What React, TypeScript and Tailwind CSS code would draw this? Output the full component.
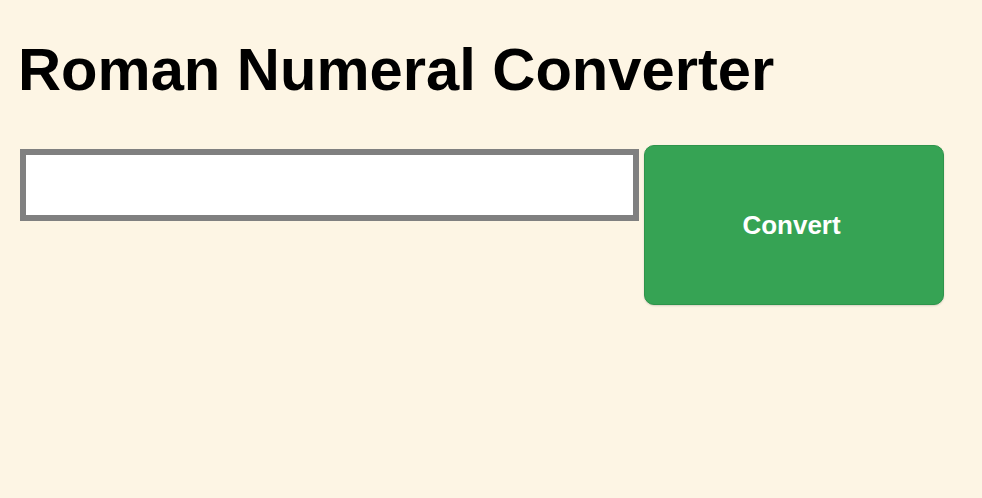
import React from "react";

export default function App() {
  return (
    <div className="min-h-[498px] w-full bg-[#fdf5e4] px-[20px] pt-[40px]" style={{ fontFamily: '"Liberation Sans", Arial, sans-serif' }}>
      <h1 className="-ml-[2px] m-0 text-[59.7px] font-bold leading-[60px] text-black" style={{ fontFamily: '"Liberation Sans", Arial, sans-serif' }}>
        Roman Numeral Converter
      </h1>
      <div className="mt-[45px] flex items-start gap-[5px]">
        <input
          type="text"
          className="mt-[4px] box-border h-[72px] w-[619px] border-[6px] border-solid border-[#808080] bg-white px-2 text-[24px] outline-none"
        />
        <button className="box-border flex h-[160px] w-[300px] items-center justify-center rounded-[10px] border border-[#2e944b] bg-[#36a354] pr-[5px] text-[26px] font-bold text-white shadow-[0_1px_2px_rgba(0,0,0,0.15)]">
          Convert
        </button>
      </div>
    </div>
  );
}
